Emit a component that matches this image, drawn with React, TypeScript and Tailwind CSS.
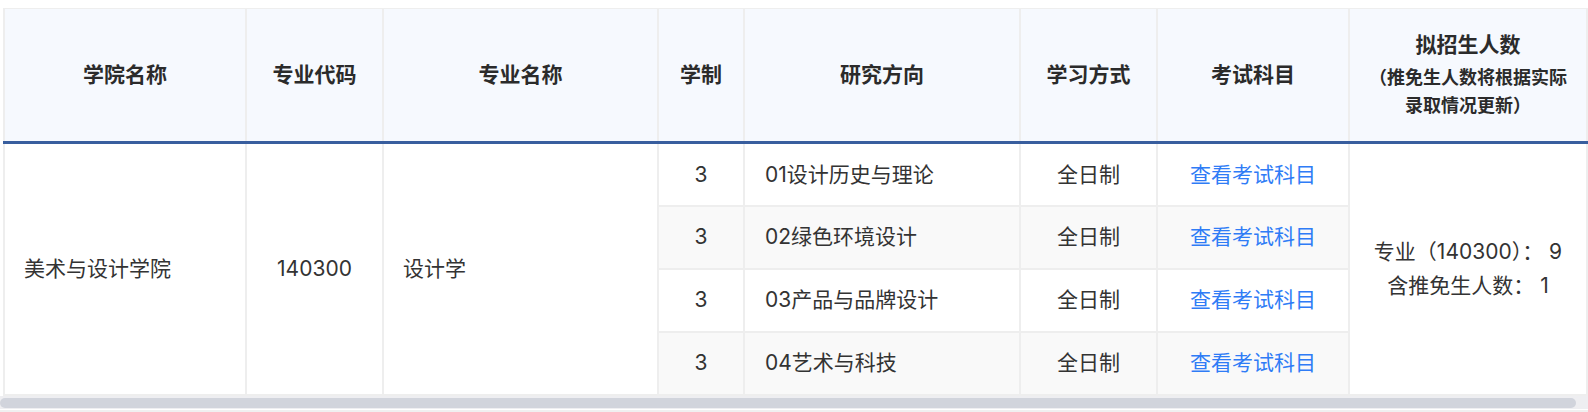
import React from "react";

const rows = [
  { dir: "01设计历史与理论" },
  { dir: "02绿色环境设计" },
  { dir: "03产品与品牌设计" },
  { dir: "04艺术与科技" },
];

const th =
  "border-2 border-t border-[#eeeeee] border-b-[3px] border-b-[#385e9e] text-center align-middle font-semibold text-[21px] text-[#2b2b2b] p-0";
const cell = "border-2 border-[#eeeeee] text-[21px] align-middle p-0";
const td = `${cell} text-[#333333]`;

export default function App() {
  return (
    <div
      className="w-[1588px] h-[412px] bg-white overflow-hidden"
      style={{ fontFamily: '"Inter", "Noto Sans CJK SC", sans-serif' }}
    >
      <div className="pt-[8px] pl-[3px]">
        <table className="border-collapse table-fixed w-[1583px]">
          <colgroup>
            <col className="w-[242px]" />
            <col className="w-[137px]" />
            <col className="w-[275px]" />
            <col className="w-[86px]" />
            <col className="w-[276px]" />
            <col className="w-[137px]" />
            <col className="w-[192px]" />
            <col className="w-[238px]" />
          </colgroup>
          <thead>
            <tr className="bg-[#f6f9fe] h-[134px]">
              <th className={th}>学院名称</th>
              <th className={th}>专业代码</th>
              <th className={th}>专业名称</th>
              <th className={th}>学制</th>
              <th className={th}>研究方向</th>
              <th className={th}>学习方式</th>
              <th className={th}>考试科目</th>
              <th className={th}>
                <div className="leading-[30px] text-[21px]">拟招生人数</div>
                <div className="mt-[4px] text-[18px] leading-[28px]">
                  （推免生人数将根据实际
                  <br />
                  录取情况更新）
                </div>
              </th>
            </tr>
          </thead>
          <tbody>
            {rows.map((r, i) => {
              const alt = i % 2 === 1 ? "bg-[#f9f9f9]" : "bg-white";
              return (
                <tr key={i} className="h-[63px]">
                  {i === 0 && (
                    <>
                      <td rowSpan={4} className={`${td} bg-white text-left pl-[19px]`}>
                        美术与设计学院
                      </td>
                      <td rowSpan={4} className={`${td} bg-white text-center`}>
                        140300
                      </td>
                      <td rowSpan={4} className={`${td} bg-white text-left pl-[19px]`}>
                        设计学
                      </td>
                    </>
                  )}
                  <td className={`${td} ${alt} text-center`}>3</td>
                  <td className={`${td} ${alt} text-left pl-[20px]`}>{r.dir}</td>
                  <td className={`${td} ${alt} text-center`}>全日制</td>
                  <td className={`${cell} ${alt} text-center text-[#2f7cf6]`}>
                    <a className="cursor-pointer">查看考试科目</a>
                  </td>
                  {i === 0 && (
                    <td rowSpan={4} className={`${td} bg-white text-center leading-[34px]`}>
                      <div>专业（140300）：&nbsp;9</div>
                      <div>含推免生人数：&nbsp;1</div>
                    </td>
                  )}
                </tr>
              );
            })}
          </tbody>
        </table>
      </div>
      <div className="h-[13px] bg-[#eeeef1] pt-[2px] pr-[12px]">
        <div className="h-[10px] rounded-full bg-[#d1d4dc]" />
      </div>
      <div className="h-[2px] mt-[1px] bg-[#f0f0f0]" />
    </div>
  );
}
